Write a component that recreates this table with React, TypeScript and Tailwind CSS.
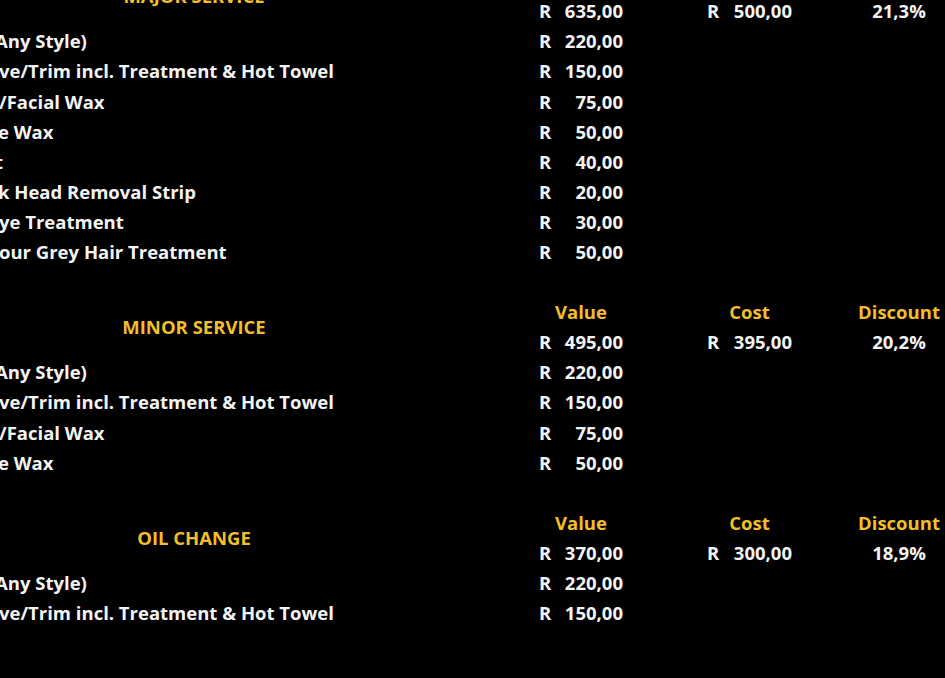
import React from 'react';

type Section = {
  title: string;
  value: string;
  cost: string;
  discount: string;
  items: { label: string; shift: string; amount: string }[];
};

const sections: Section[] = [
  {
    title: 'MAJOR SERVICE',
    value: '635,00',
    cost: '500,00',
    discount: '21,3%',
    items: [
      { label: 'Any Style)', shift: '-ml-[5px]', amount: '220,00' },
      { label: 've/Trim incl. Treatment & Hot Towel', shift: '-ml-[1px]', amount: '150,00' },
      { label: '/Facial Wax', shift: '-ml-[1px]', amount: '75,00' },
      { label: 'e Wax', shift: '-ml-[2px]', amount: '50,00' },
      { label: 't', shift: '-ml-[5px]', amount: '40,00' },
      { label: 'k Head Removal Strip', shift: '-ml-[2px]', amount: '20,00' },
      { label: 'ye Treatment', shift: '-ml-[1px]', amount: '30,00' },
      { label: 'our Grey Hair Treatment', shift: '-ml-[1px]', amount: '50,00' },
    ],
  },
  {
    title: 'MINOR SERVICE',
    value: '495,00',
    cost: '395,00',
    discount: '20,2%',
    items: [
      { label: 'Any Style)', shift: '-ml-[5px]', amount: '220,00' },
      { label: 've/Trim incl. Treatment & Hot Towel', shift: '-ml-[1px]', amount: '150,00' },
      { label: '/Facial Wax', shift: '-ml-[1px]', amount: '75,00' },
      { label: 'e Wax', shift: '-ml-[2px]', amount: '50,00' },
    ],
  },
  {
    title: 'OIL CHANGE',
    value: '370,00',
    cost: '300,00',
    discount: '18,9%',
    items: [
      { label: 'Any Style)', shift: '-ml-[5px]', amount: '220,00' },
      { label: 've/Trim incl. Treatment & Hot Towel', shift: '-ml-[1px]', amount: '150,00' },
    ],
  },
];

const cols = 'grid grid-cols-[535px_92px_76px_93px_57px_92px] h-[30.1px] items-center';

function Money({ amount }: { amount: string }) {
  return (
    <div className="flex justify-between pl-[4px] pr-[4px]">
      <span>R</span>
      <span>{amount}</span>
    </div>
  );
}

function SectionBlock({ s }: { s: Section }) {
  return (
    <div>
      {/* header + totals, title merged over both rows */}
      <div className="flex">
        <div className="w-[535px] shrink-0 flex">
          <div className="w-[388px] flex items-center justify-center text-[#f3be2b]">{s.title}</div>
        </div>
        <div className="flex-1">
          <div className="grid grid-cols-[92px_76px_93px_57px_92px] h-[30.1px] items-center text-[#f3be2b]">
            <div className="text-center">Value</div>
            <div />
            <div className="text-center">Cost</div>
            <div />
            <div className="text-center whitespace-nowrap">Discount</div>
          </div>
          <div className="grid grid-cols-[92px_76px_93px_57px_92px] h-[30.1px] items-center">
            <Money amount={s.value} />
            <div />
            <Money amount={s.cost} />
            <div />
            <div className="text-center">{s.discount}</div>
          </div>
        </div>
      </div>
      {s.items.map((it, i) => (
        <div key={i} className={cols}>
          <div className="overflow-hidden whitespace-nowrap">
            <span className={`block ${it.shift}`}>{it.label}</span>
          </div>
          <Money amount={it.amount} />
          <div />
          <div />
          <div />
          <div />
        </div>
      ))}
      <div className="h-[30.1px]" />
    </div>
  );
}

export default function App() {
  return (
    <div
      className="w-[945px] h-[678px] overflow-hidden bg-black text-[#f4f4f4] font-bold text-[18.5px]"
      style={{ fontFamily: '"Open Sans", Lato, sans-serif' }}
    >
      <div className="-mt-[34px]">
        {sections.map((s) => (
          <SectionBlock key={s.title} s={s} />
        ))}
      </div>
    </div>
  );
}
